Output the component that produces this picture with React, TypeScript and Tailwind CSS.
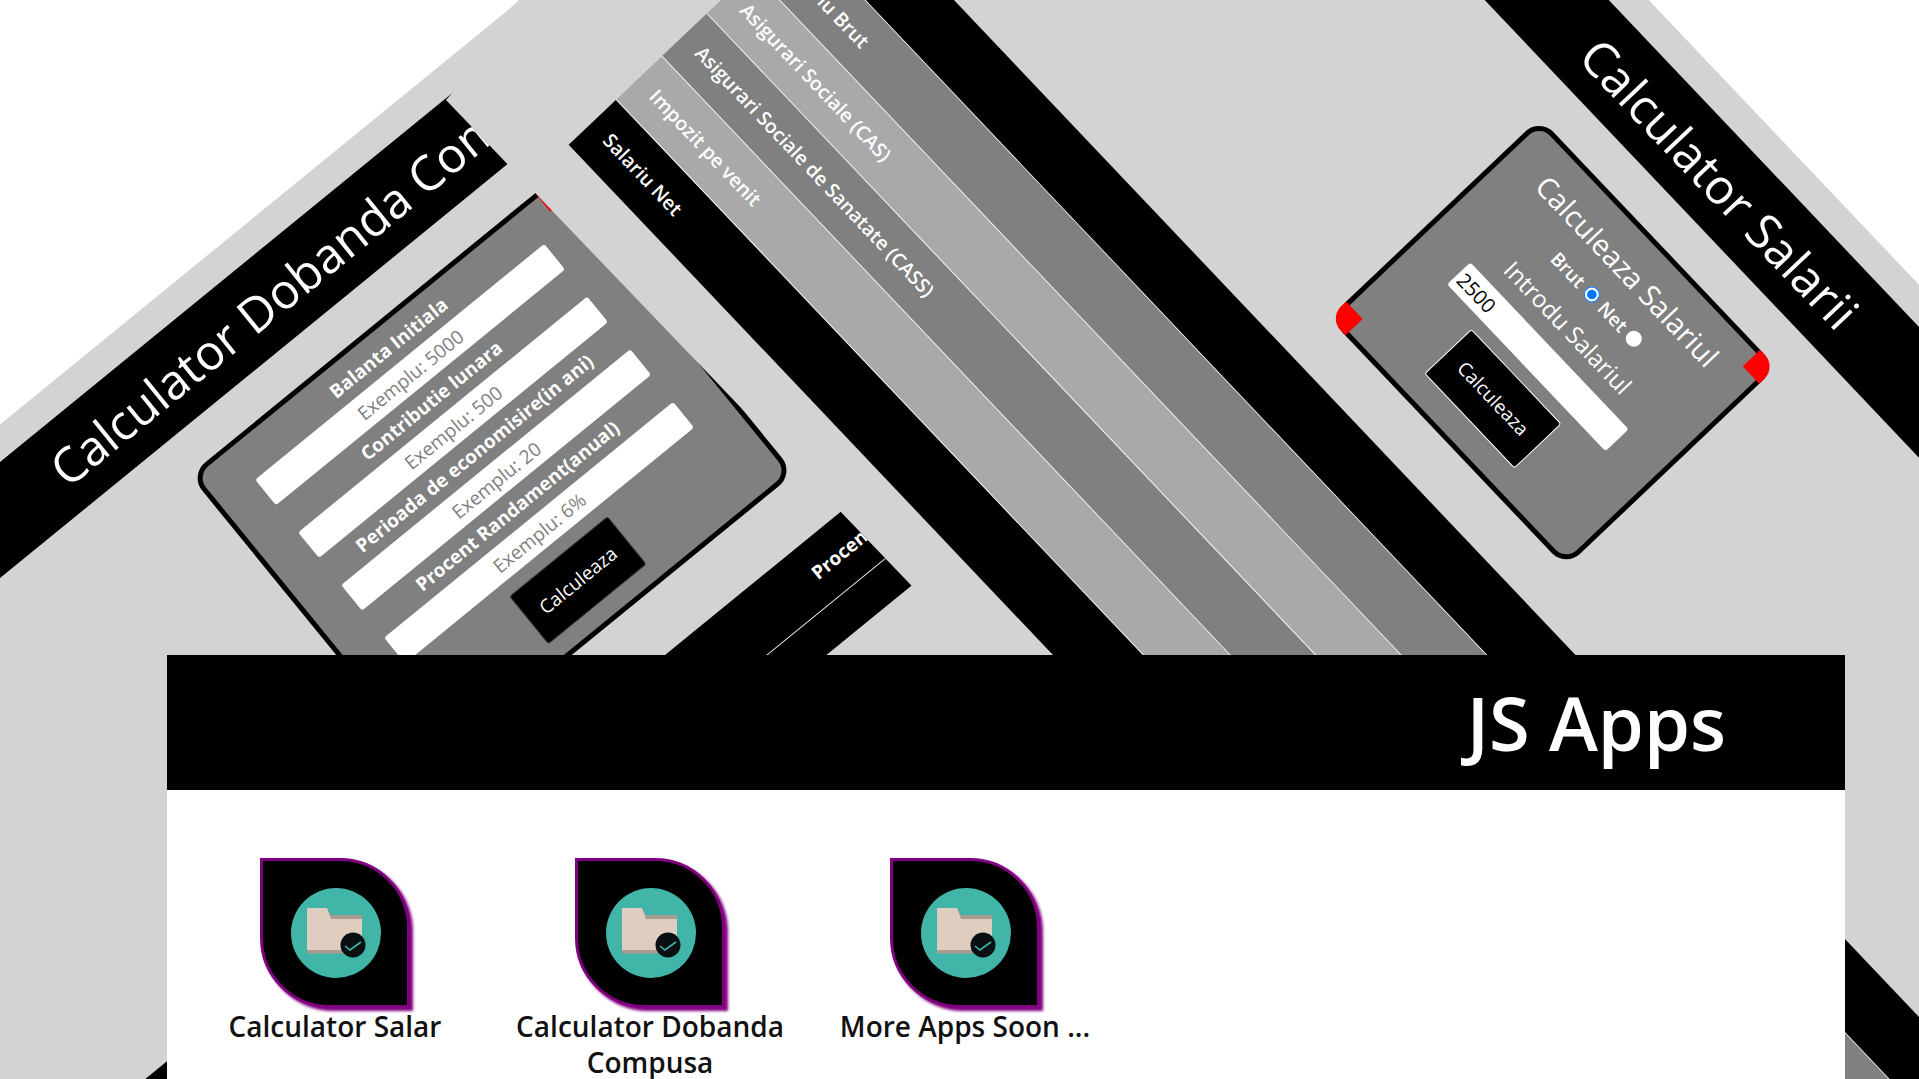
import type { ReactNode } from 'react';

const salaryRows = [
    { label: '', className: 'h-[65px] bg-black' },
    { label: 'Salariu Brut', className: 'h-[62px] bg-[#808080]' },
    { label: 'Asigurari Sociale (CAS)', className: 'h-[62px] bg-[#a9a9a9]' },
    { label: 'Asigurari Sociale de Sanatate (CASS)', className: 'h-[62px] bg-[#808080]' },
    { label: 'Impozit pe venit', className: 'h-[63px] bg-[#a9a9a9]' },
    { label: 'Salariu Net', className: 'h-[65px] bg-black' },
];

const savingsFields = [
    { label: 'Balanta Initiala', placeholder: 'Exemplu: 5000' },
    { label: 'Contributie lunara', placeholder: 'Exemplu: 500' },
    { label: 'Perioada de economisire(in ani)', placeholder: 'Exemplu: 20' },
    { label: 'Procent Randament(anual)', placeholder: 'Exemplu: 6%' },
];

const apps = ['Calculator Salar', 'Calculator Dobanda Compusa', 'More Apps Soon ...'];

const PageHeader = ({ title }: { title: string }) => (
    <div className="flex h-[90px] items-center justify-center bg-black text-[48.5px] font-medium text-white">
        {title}
    </div>
);

const Card = ({ className, children }: { className: string; children: ReactNode }) => (
    <div className={`relative isolate mx-auto rounded-[20px] border-[5px] border-black bg-[#808080] ${className}`}>
        <div className="absolute -right-[5px] -top-[5px] -z-10 h-6 w-6 rounded-tr-[17px] bg-[#ff0000]" />
        <div className="absolute -bottom-[5px] -left-[5px] -z-10 h-6 w-6 rounded-bl-[17px] bg-[#ff0000]" />
        <div className="flex flex-col items-center text-white">{children}</div>
    </div>
);

const SalaryPage = () => (
    <div className="absolute left-0 top-0 h-[1500px] w-[1919px] origin-top-left bg-[#d3d3d3] pt-[29px] [transform:translate(1113.5px,-564px)_rotate(46.5deg)]">
        <PageHeader title="Calculator Salarii" />
        <Card className="mt-[41px] h-[291px] w-[344px]">
            <h2 className="mt-[17px] text-[29px] font-medium leading-[40px]">Calculeaza Salariul</h2>
            <div className="mt-[6px] flex h-8 items-center gap-[6px] text-[19px] font-semibold">
                <span>Brut</span>
                <input type="radio" name="tip" defaultChecked className="h-4 w-4" />
                <span>Net</span>
                <input type="radio" name="tip" className="h-4 w-4 appearance-none rounded-full bg-white" />
            </div>
            <label className="mt-2 text-[24px] font-medium leading-8">Introdu Salariul</label>
            <input
                defaultValue="2500"
                className="mt-[10px] h-8 w-[230px] rounded-[3px] bg-white px-1 text-[20px] text-black"
            />
            <button className="mt-[13px] h-[65px] w-[131px] rounded-[3px] border border-white bg-black text-[19px] text-white">
                Calculeaza
            </button>
        </Card>
        <div className="mx-auto mt-[52.5px] w-[1642px] text-[19.5px] font-semibold text-white">
            {salaryRows.map((row) => (
                <div
                    key={row.className + row.label}
                    className={`flex items-center border-b-[1.5px] border-white pl-[21px] last:border-b-0 ${row.className}`}
                >
                    {row.label}
                </div>
            ))}
        </div>
    </div>
);

const SavingsPage = () => (
    <div className="absolute inset-0 [clip-path:polygon(0_0,535px_0,446px_100px,1000px_678px,1000px_1079px,0_1079px)]">
        <div className="absolute left-0 top-0 h-[1500px] w-[1919px] origin-top-left bg-[#d3d3d3] pt-[29px] [transform:translate(-472.8px,810.1px)_rotate(-39.2deg)]">
            <PageHeader title="Calculator Dobanda Compusa" />
            <Card className="mt-[40px] h-[381px] w-[470px]">
                <div className="pt-[5px]" />
                {savingsFields.map((field) => (
                    <div key={field.label} className="flex flex-col items-center">
                        <label className="text-[19px] font-bold leading-[35px]">{field.label}</label>
                        <input
                            placeholder={field.placeholder}
                            className="h-[33px] w-[373px] rounded-[3px] bg-white text-center text-[19px] text-black placeholder:text-[#808080]"
                        />
                    </div>
                ))}
                <button className="mt-[14px] h-[62px] w-[127px] rounded-[3px] border border-[#333333] bg-black text-[19px] text-white">
                    Calculeaza
                </button>
            </Card>
            <div className="mx-auto mt-[59px] w-[1632px] text-[19px] font-bold text-white">
                <div className="flex h-[65px] items-center border-b-[1.5px] border-white bg-black pl-[1002px]">
                    Procent Randament
                </div>
                <div className="h-[37px] bg-black" />
            </div>
        </div>
    </div>
);

const AppIcon = () => (
    <div className="h-[150px] w-[150px] rounded-bl-[70px] rounded-tr-[70px] border-[3px] border-[#800080] bg-black [box-shadow:3px_3px_3px_#800080]">
        <svg viewBox="3 3 144 144" className="h-full w-full">
            <circle cx="76" cy="75" r="45" fill="#40b5a8" />
            <path d="M47 50H67L71 57H102V61H47Z" fill="#a89c92" />
            <path d="M47 50H67L71 61H102V93H47Z" fill="#dfcec0" />
            <rect x="47" y="92" width="55" height="3.5" fill="#a89c92" />
            <circle cx="93" cy="87" r="12.5" fill="#0a0f12" />
            <path d="M85 88L90 92L101 84" fill="none" stroke="#40b5a8" strokeWidth="1.6" />
        </svg>
    </div>
);

const AppsWindow = () => (
    <div className="absolute left-[167px] top-[655px] h-[424px] w-[1678px] overflow-hidden bg-white">
        <div className="flex h-[135px] items-center justify-end bg-black pr-[119px] text-[74px] font-semibold text-white">
            JS Apps
        </div>
        <div className="flex gap-[25px] pl-[23px] pt-[68px]">
            {apps.map((name) => (
                <div key={name} className="flex w-[290px] flex-col items-center text-center">
                    <AppIcon />
                    <p className="text-[28px] font-semibold leading-[36px] text-[#111111]">{name}</p>
                </div>
            ))}
        </div>
    </div>
);

export default function App() {
    return (
        <div className="relative h-[1079px] w-[1919px] overflow-hidden bg-white font-['Open_Sans',sans-serif]">
            <SalaryPage />
            <SavingsPage />
            <AppsWindow />
        </div>
    );
}
